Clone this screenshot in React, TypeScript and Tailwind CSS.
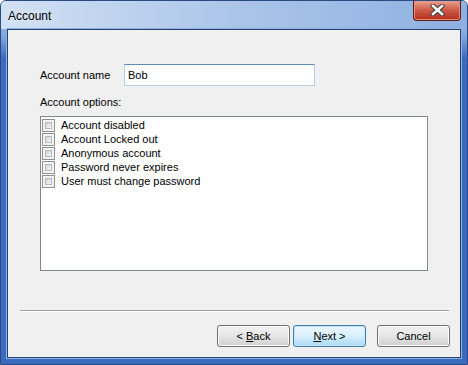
import React from "react"

const font = { fontFamily: '"Liberation Sans", Arial, sans-serif' }

const options = [
  "Account disabled",
  "Account Locked out",
  "Anonymous account",
  "Password never expires",
  "User must change password",
]

function Checkbox() {
  return (
    <span className="w-[13px] h-[13px] border border-[#8e8f8f] bg-[#f4f4f4] p-[2px] flex shrink-0">
      <span className="flex-1 border border-[#b6bac0] bg-gradient-to-br from-[#cfd3d8] to-[#f7f7f7]" />
    </span>
  )
}

function Button({ children, primary }: { children: React.ReactNode; primary?: boolean }) {
  return (
    <button
      className={
        primary
          ? "w-[73px] h-[22px] rounded-[3px] border border-[#3c7fb1] bg-gradient-to-b from-[#eaf6fd] via-[#d9f0fc] to-[#a7d9f5] text-[11px] text-black shadow-[inset_0_0_0_1px_#c5e6f8]"
          : "w-[73px] h-[22px] rounded-[3px] border border-[#707070] bg-gradient-to-b from-[#f2f2f2] via-[#e6e6e6] to-[#cfcfcf] text-[11px] text-black shadow-[inset_0_0_0_1px_#fcfcfc]"
      }
    >
      {children}
    </button>
  )
}

export default function App() {
  return (
    <div style={font} className="w-[468px] h-[365px] bg-white">
      <div className="relative w-[468px] h-[365px] flex flex-col rounded-t-[6px] border border-[#2a4b82] bg-gradient-to-b from-[#c5d7ef] via-[#7fa3dc] via-[10%] to-[#3a6bbf] to-[16%] overflow-hidden">
        {/* title bar */}
        <div className="h-[28px] shrink-0 flex items-center pl-[7px] bg-gradient-to-r from-[#d2e1f4] via-[#abc5e9] to-[#8eb0e1]">
          <span className="text-[12px] text-black mt-[1px] [text-shadow:0_0_8px_#ffffff]">Account</span>
        </div>

        {/* close button */}
        <div className="absolute top-[-1px] right-[6px] w-[48px] h-[21px] rounded-b-[4px] border border-[#5b1d15] border-t-0 bg-gradient-to-b from-[#e9a897] via-[#cf5a48] to-[#b32a19] shadow-[inset_0_0_0_1px_#e98c78] flex items-center justify-center">
          <svg width="15" height="12" viewBox="0 0 15 12">
            <path d="M3 2 L12 10 M12 2 L3 10" stroke="#3b3b3b" strokeWidth="4.5" strokeLinecap="square" />
            <path d="M3 2 L12 10 M12 2 L3 10" stroke="#ffffff" strokeWidth="2.6" strokeLinecap="square" />
          </svg>
        </div>

        {/* client area */}
        <div className="flex-1 mx-[6px] mb-[6px] border border-[#27436f] bg-[#f0f0f0] shadow-[0_0_0_1px_#8fb1e3] flex flex-col text-[11px] text-black">
          <div className="ml-[32px] mt-[34px] h-[22px] flex items-center">
            <span className="w-[84px]">Account name</span>
            <div className="w-[191px] h-[22px] border border-[#b3cde4] border-t-[#5f8bb5] bg-white flex items-center pl-[3px] text-[11px]">
              Bob
            </div>
          </div>

          <div className="ml-[32px] mt-[10px] h-[13px] leading-[13px]">Account options:</div>

          <div className="ml-[32px] mt-[7px] w-[388px] h-[155px] border border-[#828790] bg-white pt-[1px] flex flex-col">
            {options.map((o) => (
              <div key={o} className="h-[14px] flex items-center pl-[1px] gap-[6px]">
                <Checkbox />
                <span className="leading-[14px]">{o}</span>
              </div>
            ))}
          </div>

          <div className="ml-[12px] mt-[39px] w-[429px] h-[2px] border-t border-[#a0a0a0] bg-white" />

          <div className="mt-[13px] mr-[10px] flex justify-end">
            <Button>
              &lt; <span className="underline">B</span>ack
            </Button>
            <div className="w-[3px]" />
            <Button primary>
              <span className="underline">N</span>ext &gt;
            </Button>
            <div className="w-[11px]" />
            <Button>Cancel</Button>
          </div>
        </div>
      </div>
    </div>
  )
}
